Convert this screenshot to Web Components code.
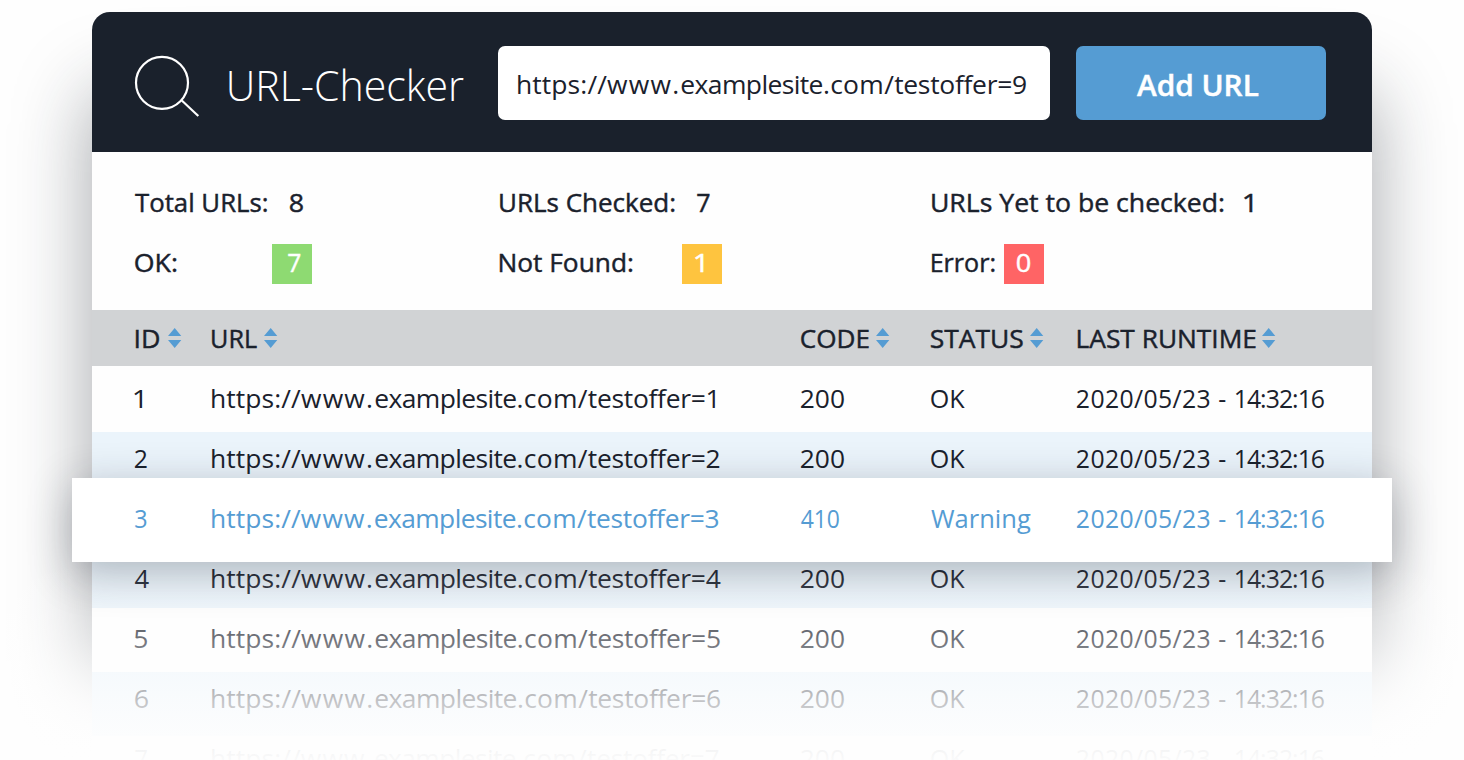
<!DOCTYPE html>
<html lang="en">
<head>
<meta charset="utf-8">
<title>URL-Checker</title>
<style>
  body { margin: 0; background: #fefefe; overflow: hidden; font-family: "Open Sans", "Noto Sans", sans-serif; color: #1a212c; }
</style>
</head>
<body>
<url-checker></url-checker>
<script>
const define = (name, html, setup) => customElements.define(name, class extends HTMLElement {
  connectedCallback() {
    if (this.shadowRoot) return;
    const root = this.attachShadow({ mode: 'open' });
    root.innerHTML = html;
    if (setup) setup(this, root);
  }
});

/* One line of text condensed to an exact ink width (w), font size (size) and weight.
   "|" splits the text into parts, each with its own letter spacing from tune. */
const pen = document.createElement('canvas').getContext('2d');
const FAMILY = '"Open Sans", "Noto Sans", sans-serif';
define('fit-text', `<style>
  :host { display: block; flex: none; height: 40px; line-height: 40px; white-space: nowrap; }
  .line { display: inline-block; white-space: pre; transform-origin: 0 0; }
  :host([weight="500"]) .line, :host([weight="600"]) .line { -webkit-text-stroke: .45px currentColor; }
</style><span class="line"></span>`, (host, root) => {
  const size = +(host.getAttribute('size') || 26);
  const weight = host.getAttribute('weight') || 400;
  const w = +host.getAttribute('w');
  const parts = host.getAttribute('text').split('|');
  const tune = (host.getAttribute('tune') || '').split(' ').map(Number);
  const line = root.querySelector('.line');
  let extra = 0;
  parts.forEach((part, i) => {
    const gap = tune[i] || 0;
    extra += gap * (i < parts.length - 1 ? part.length : part.length - 1);
    if (parts.length === 1) { line.textContent = part; return; }
    const span = document.createElement('span');
    span.textContent = part;
    if (gap) span.style.letterSpacing = gap + 'px';
    line.append(span);
  });
  host.style.width = w + 'px';
  host.style.marginLeft = (host.getAttribute('x') || 0) + 'px';
  host.style.font = `${weight} ${size}px/40px ${FAMILY}`;
  pen.font = `${weight} ${size * 10}px ${FAMILY}`;
  const m = pen.measureText(parts.join(''));
  const left = m.actualBoundingBoxLeft / 10;
  const scale = w / (m.actualBoundingBoxRight / 10 + left + extra);
  line.style.transform = `translateX(${left * scale}px) scaleX(${scale})`;
});

define('search-icon', `<style>:host { display: block; width: 66px; height: 64px; } svg { display: block; }</style>
<svg width="66" height="64" fill="none" stroke="#fff" stroke-width="2.2"><circle cx="28" cy="28.8" r="26"/><path d="M47.8 46.5 64.3 62"/></svg>`);

define('sort-icon', `<style>:host { display: block; flex: none; width: 14px; height: 20px; } svg { display: block; }</style>
<svg width="14" height="20" fill="#559cd3"><path d="M6.7 0 13.3 8H0ZM6.7 20 13.3 12H0Z"/></svg>`);

const URL_PARTS = 'https://|www.|examplesite|.com/|testoffer=|';
const URL_TUNE = '.1 1.2 -.6 .3 -.3 0';

define('app-header', `<style>
  :host { display: flex; align-items: flex-start; box-sizing: border-box; height: 140px; padding: 34px 46px 0 42px; background: #1a212c; border-radius: 18px 18px 0 0; color: #fff; }
  search-icon { margin-top: 8px; }
  .title { margin: 19px 0 0 29px; }
  .field { display: flex; box-sizing: border-box; width: 552px; height: 74px; margin-left: 34.5px; padding: 18px 0 0 19.8px; border-radius: 7px; background: #fff; color: #1a212c; }
  .button { display: flex; box-sizing: border-box; width: 250px; height: 74px; margin-left: 26px; padding: 19px 0 0 61px; border-radius: 7px; background: #559cd3; }
</style>
<search-icon></search-icon>
<div class="title"><fit-text text="URL-Checker" size="41.5" weight="300" w="234.5"></fit-text></div>
<div class="field"><fit-text text="${URL_PARTS}9" tune="${URL_TUNE}" w="508"></fit-text></div>
<div class="button"><fit-text text="Add URL" size="28.5" weight="600" w="121"></fit-text></div>`);

define('stat-bar', `<style>
  :host { display: grid; grid-template-columns: 364px 432px 1fr; grid-template-rows: 60px 60px; box-sizing: border-box; height: 158px; padding: 30px 0 0 42px; background: #fefefe; }
  .item { display: flex; align-items: flex-start; }
  .badge { box-sizing: border-box; width: 40px; height: 40px; color: #fff; margin-top: 2px; }
  .badge fit-text { margin-top: -2px; }
</style>`, (host, root) => {
  /* label, x, width, gap to value or badge, value, value x, value width, badge colour */
  const items = [
    ['Total URLs:', .7, 132, 23.3, '8', 0, 13],
    ['URLs Checked:', 2, 174.5, 22, '7', 0, 12.5],
    ['URLs Yet to be checked:', 1.7, 291.5, 21.3, '1', 0, 8.2],
    ['OK:', 1, 41.3, 95.7, '7', 16, 12.3, '#8eda72'],
    ['Not Found:', 2, 132.3, 49.7, '1', 13.5, 8.3, '#fec43f'],
    ['Error:', 1.7, 62.5, 9.8, '0', 13, 13.2, '#ff6465'],
  ];
  root.innerHTML += items.map(([t, x, w, gap, v, vx, vw, c]) => `<div class="item">
    <fit-text weight="500" text="${t}" x="${x}" w="${w}"></fit-text>
    <div class="${c ? 'badge' : ''}" style="margin-left:${gap}px;${c ? 'background:' + c : ''}"><fit-text weight="500" text="${v}" x="${vx}" w="${vw}"></fit-text></div>
  </div>`).join('');
});

define('table-row', `<style>
  :host { display: grid; grid-template-columns: 76px 590px 130px 146px 1fr; box-sizing: border-box; padding-left: 42px; background: #fefefe; }
  :host([kind=head]) { height: 56px; padding-top: 8px; background: #d1d3d5; }
  :host([kind=alt]) { background: #ebf4fb; }
  :host([kind=active]) { position: relative; z-index: 3; margin: 0 -20px; padding-left: 62px; color: #559cd3; background: #fff; box-shadow: 0 10px 44px rgba(27,34,45,.3); }
</style><slot></slot>`);

define('url-table', `<style>
  :host { display: block; }
  .cell { display: flex; height: 40px; }
  sort-icon { margin-top: 10px; }
</style>`, (host, root) => {
  const head = [['ID', 1.8, 23, 9.2], ['URL', 2.2, 44.5, 7.3], ['CODE', 1.3, 67.5, 7], ['STATUS', 1.2, 92, 6.8], ['LAST RUNTIME', 2.2, 177.5, 6.3]];
  let html = '<table-row kind="head">' + head.map(([t, x, w, gap]) =>
    `<div class="cell"><fit-text weight="500" text="${t}" x="${x}" w="${w}"></fit-text><sort-icon style="margin-left:${gap}px"></sort-icon></div>`).join('') + '</table-row>';
  /* id x, id width, url width, code, code width, status, status width, kind, height, inset of the text line */
  const rows = [
    [.3, 8.2, 503, '200', 43, 'OK', 34, '', 66, 12],
    [1, 12, 507.5, '200', 43, 'OK', 34, 'alt', 46, 6],
    [1, 11.3, 506, '410', 38, 'Warning', 99.5, 'active', 84, 20],
    [.7, 14, 508.5, '200', 43, 'OK', 34, 'alt', 46, -4],
    [1, 12, 507.5, '200', 43, 'OK', 34, '', 64, 10],
    [1, 13, 508, '200', 43, 'OK', 34, 'alt', 64, 6],
    [1, 12, 506.5, '200', 43, 'OK', 34, '', 64, 2],
  ];
  rows.forEach(([ix, iw, uw, code, cw, st, sw, kind, h, inset], i) => {
    const cells = [[i + 1, ix, iw], [URL_PARTS + (i + 1), 2, uw, URL_TUNE], [code, 1, cw], [st, 1, sw], ['2020/05/23| - |14:32:16', 1, 247, '.4 .6 -1']];
    html += `<table-row kind="${kind}" style="height:${h}px">` + cells.map(([t, x, w, tune = '']) =>
      `<div class="cell" style="margin-top:${inset}px"><fit-text text="${t}" x="${x}" w="${w}" tune="${tune}"></fit-text></div>`).join('') + '</table-row>';
  });
  root.innerHTML += html;
});

define('url-checker', `<style>
  :host { display: block; position: relative; box-sizing: border-box; height: 760px; padding: 12px 92px 0; overflow: hidden; }
  .panel { height: 595px; border-radius: 18px 18px 0 0; box-shadow: 0 80px 78px rgba(27,34,45,.4); }
  .fade { position: absolute; z-index: 2; left: 0; right: 0; top: 565px; bottom: 0; pointer-events: none; background: linear-gradient(rgba(254,254,254,0), rgba(254,254,254,.38) 75px, rgba(254,254,254,.73) 135px, rgba(254,254,254,.96) 186px, rgba(254,254,254,.98)); }
</style>
<div class="panel"><app-header></app-header><stat-bar></stat-bar><url-table></url-table></div>
<div class="fade"></div>`);
</script>
</body>
</html>
